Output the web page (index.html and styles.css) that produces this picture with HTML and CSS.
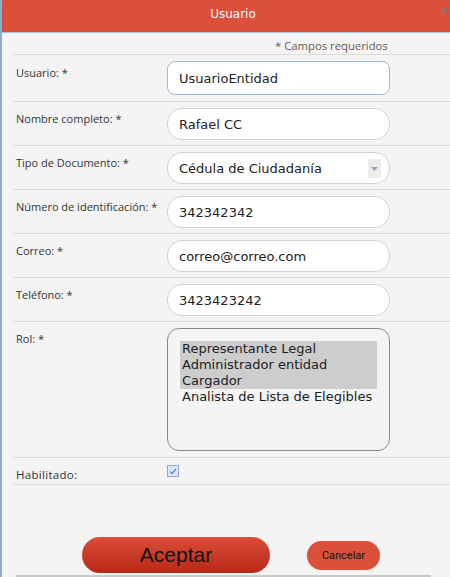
FILE: index.html
```html
<!DOCTYPE html>
<html lang="es">
<head>
<meta charset="utf-8">
<title>Usuario</title>
<link rel="stylesheet" href="styles.css">
</head>
<body>
<div class="dialog">
  <div class="titlebar">
    <span class="title">Usuario</span>
    <span class="close">x</span>
  </div>
  <div class="content">
    <div class="required">* Campos requeridos</div>
    <div class="row first">
      <label class="lbl">Usuario: *</label>
      <div class="field focus">UsuarioEntidad</div>
    </div>
    <div class="row">
      <label class="lbl">Nombre completo: *</label>
      <div class="field">Rafael CC</div>
    </div>
    <div class="row">
      <label class="lbl">Tipo de Documento: *</label>
      <div class="field select">Cédula de Ciudadanía<span class="arrow"><svg width="7" height="4" viewBox="0 0 7 4"><path d="M0 0h7L3.5 4z" fill="#8da6c4"/></svg></span></div>
    </div>
    <div class="row">
      <label class="lbl">Número de identificación: *</label>
      <div class="field">342342342</div>
    </div>
    <div class="row">
      <label class="lbl">Correo: *</label>
      <div class="field">correo@correo.com</div>
    </div>
    <div class="row">
      <label class="lbl">Teléfono: *</label>
      <div class="field">3423423242</div>
    </div>
    <div class="row rol-row">
      <label class="lbl">Rol: *</label>
      <div class="listbox">
        <div class="opts">
          <div class="opt sel">Representante Legal</div>
          <div class="opt sel">Administrador entidad</div>
          <div class="opt sel">Cargador</div>
          <div class="opt">Analista de Lista de Elegibles</div>
        </div>
      </div>
    </div>
    <div class="row check-row">
      <label class="lbl hab">Habilitado:</label>
      <div class="checkbox"><svg width="8" height="7" viewBox="0 0 8 7"><path d="M1 3.5l2 2L7 1" fill="none" stroke="#5b8fd0" stroke-width="1.5"/></svg></div>
    </div>
    <div class="buttons">
      <button class="btn accept">Aceptar</button>
      <button class="btn cancel">Cancelar</button>
    </div>
    <div class="bottom-line"></div>
  </div>
</div>
</body>
</html>
```
FILE: styles.css
```css
html, body {
  margin: 0;
  padding: 0;
  background: #f4f4f4;
}
.dialog {
  width: 450px;
  height: 577px;
  border-left: 2px solid #86acd6;
  box-sizing: border-box;
  background: #f4f4f4;
  overflow: hidden;
}
.titlebar {
  height: 33px;
  background: #dc4f3a;
  border-bottom: 1px solid #a9c6e4;
  border-top-left-radius: 4px;
  margin-left: -2px;
  display: flex;
  align-items: center;
  justify-content: center;
  position: relative;
  box-sizing: border-box;
}
.title {
  font-family: "DejaVu Sans", sans-serif;
  font-size: 12px;
  color: #fff;
  margin-left: 16px;
  margin-top: -5px;
}
.close {
  position: absolute;
  right: 2px;
  top: 4px;
  font-family: "DejaVu Sans", sans-serif;
  font-size: 11px;
  font-weight: bold;
  color: #8e6f78;
}
.content {
  padding-left: 11px;
}
.required {
  font-family: "Open Sans", sans-serif;
  font-size: 11.3px;
  color: #6b5a4f;
  padding-left: 262px;
  height: 21px;
  line-height: 25px;
  border-bottom: 1px solid #dcdcdc;
}
.row {
  display: flex;
  align-items: flex-start;
  padding: 6px 0 5px 3px;
  border-bottom: 1px solid #dcdcdc;
}
.row.first,
.row.rol-row {
  padding-bottom: 6px;
}
.lbl {
  width: 151px;
  flex: none;
  font-family: "Open Sans", sans-serif;
  font-size: 11px;
  color: #333;
  padding-top: 3px;
  line-height: 15px;
}
.first .lbl {
  padding-top: 4px;
}
.field {
  width: 223px;
  height: 32px;
  box-sizing: border-box;
  border: 1px solid #d0d0d0;
  border-radius: 15px;
  background: #fff;
  font-family: "DejaVu Sans", sans-serif;
  font-size: 13px;
  color: #222;
  padding-left: 11px;
  display: flex;
  align-items: center;
  position: relative;
}
.field.focus {
  border-color: #9fb8d6;
  border-radius: 8px;
  height: 34px;
}
.arrow {
  position: absolute;
  right: 8px;
  top: 6px;
  width: 13px;
  height: 19px;
  background: #ececec;
  display: flex;
  align-items: center;
  justify-content: center;
}
.listbox {
  width: 223px;
  height: 123px;
  box-sizing: border-box;
  border: 1px solid #8a8a8a;
  border-radius: 12px;
  background: #f4f4f4;
  padding: 12px 12px 0 12px;
}
.opt {
  font-family: "DejaVu Sans", sans-serif;
  font-size: 13px;
  color: #222;
  line-height: 16px;
  padding-left: 2px;
}
.opt.sel {
  background: #cdcdcd;
}
.check-row {
  padding-top: 7px;
  padding-bottom: 0;
  height: 19px;
}
.lbl.hab {
  padding-top: 2px;
  font-size: 11.5px;
  letter-spacing: 0.3px;
}
.checkbox {
  width: 12px;
  height: 12px;
  box-sizing: border-box;
  border: 1px solid #8fa9cc;
  background: #dbe7f5;
  display: flex;
  align-items: center;
  justify-content: center;
}
.buttons {
  display: flex;
  align-items: center;
  margin-top: 52px;
  padding-left: 69px;
  height: 36px;
}
.btn {
  border: none;
  cursor: pointer;
  color: #111;
  padding: 0;
}
.accept {
  width: 188px;
  height: 36px;
  border-radius: 18px;
  background: linear-gradient(#db4d38, #b72817);
  font-family: "Liberation Sans", Arial, sans-serif;
  font-size: 21px;
}
.cancel {
  margin-left: 37px;
  width: 73px;
  height: 29px;
  border-radius: 15px;
  background: #dc4f3a;
  font-family: Roboto, "Liberation Sans", sans-serif;
  font-size: 11px;
}
.bottom-line {
  margin-top: 2px;
  margin-left: 3px;
  width: 415px;
  border-top: 2px solid #c8c8c8;
}
```
